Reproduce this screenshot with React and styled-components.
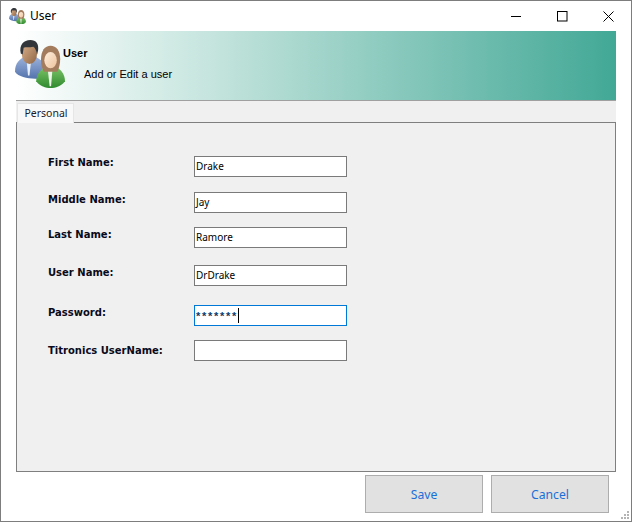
import React from "react";
import styled, { createGlobalStyle } from "styled-components";

const Global = createGlobalStyle`
  html, body { margin: 0; padding: 0; background: #fff; }
  body { font-family: "Liberation Sans", Arial, sans-serif; font-size: 11px; color: #000; }
`;

const Win = styled.div`
  width: 632px; height: 522px; box-sizing: border-box; position: relative;
  border: 1px solid #7d7d7d; background: #fff;
  display: flex; flex-direction: column; overflow: hidden;
`;
const TitleBar = styled.div`
  height: 30px; flex: none; display: flex; align-items: center; padding-left: 8px;
`;
const AppName = styled.span`
  font-family: "Noto Sans", "Open Sans", sans-serif; font-size: 12px; margin-left: 4px; margin-top: -1px;
`;
const Controls = styled.div`margin-left: auto; display: flex; align-items: center;`;
const Ctl = styled.div`width: 46px; height: 30px; display: flex; align-items: center; justify-content: center;`;
const Body = styled.div`flex: 1; display: flex; flex-direction: column; padding: 0 15px 0 15px;`;
const Banner = styled.div`
  height: 69px; flex: none; box-sizing: content-box; border-bottom: 1px solid #a0a0a0;
  background: linear-gradient(90deg, #ffffff 0%, #c6e5de 32%, #42a896 100%);
  display: flex;
`;
const BannerIcon = styled.div`width: 47px; padding-top: 9px; flex: none; margin-left: -1px; margin-right: 1px; svg { display:block; }`;
const BannerText = styled.div`display: flex; flex-direction: column;`;
const BannerTitle = styled.div`font-family: "Liberation Sans", sans-serif; font-weight: 700; font-size: 11px; margin-top: 16px; line-height: 13px;`;
const BannerSub = styled.div`font-family: "Liberation Sans", sans-serif; font-size: 11px; margin: 7px 0 0 21px; line-height: 14px;`;
const TabStrip = styled.div`
  height: 21px; flex: none; background: #f0f0f0; display: flex; padding-left: 1px; align-items: flex-end;
`;
const Tab = styled.div`
  background: #f9f9f9; border: 1px solid #e6e6e6; border-bottom: none;
  font-family: "Noto Sans", sans-serif; font-size: 10.5px; color: #1a1a2a; display: flex; align-items: center; justify-content: center; box-sizing: content-box;
  margin-bottom: -1px; padding: 0 0 2px 1px; width: 54px; height: 17px; position: relative; z-index: 1;
`;
const Panel = styled.div`
  width: 600px; height: 350px; box-sizing: border-box; border: 1px solid #7f7f7f; background: #f0f0f0; flex: none;
  padding: 33px 0 0 31px; display: flex; flex-direction: column;
`;
const Row = styled.div`
  display: flex; align-items: flex-start; margin-top: ${p => p.$mt}px; height: 21px;
`;
const Label = styled.label`
  width: 146px; flex: none; font-family: "DejaVu Sans", Verdana, sans-serif; font-weight: 700; font-size: 10px;
  line-height: 13px; color: #0a0a1a; margin-top: ${p => p.$top}px;
`;
const FieldBox = styled.div`
  width: 153px; height: 21px; box-sizing: border-box; background: #fff;
  border: 1px solid ${p => p.$active ? "#0078d7" : "#7a7a7a"};
  display: flex; align-items: center; padding-left: 1px;
  font-family: "Noto Sans", sans-serif; font-size: 10px; color: #000; line-height: 13px;
`;
const Caret = styled.span`width: 1px; height: 15px; background: #000; margin-left: 0;`;
const Stars = styled.span`font-family: "Liberation Sans", sans-serif; font-weight: 700; font-size: 11px; color: #0a3a6a; letter-spacing: 1.7px; margin-top: 1px;`;
const Footer = styled.div`display: flex; justify-content: flex-end; gap: 8px; padding: 3px 7px 0 0;`;
const Btn = styled.button`
  width: 118px; height: 38px; box-sizing: border-box; background: #e1e1e1; border: 1px solid #adadad; padding: 0;
  font-family: "Noto Sans", sans-serif; font-size: 12.2px; color: #1a6fd8;
`;
const Grip = styled.div`
  position: absolute; right: 2px; bottom: 2px; width: 8px; height: 8px;
  display: grid; grid-template-columns: repeat(3, 2px); grid-auto-rows: 2px; gap: 1px;
`;
const Dot = styled.i`background: ${p => p.$on ? "#b4b4b4" : "transparent"};`;

const People = ({ size, id }) => (
  <svg width={size} height={size * 50 / 52} viewBox="0 0 52 50">
    <defs>
      <linearGradient id={id + "b"} x1="0" y1="0" x2="0" y2="1"><stop offset="0" stopColor="#9db4dc" /><stop offset="1" stopColor="#5473ad" /></linearGradient>
      <linearGradient id={id + "g"} x1="0" y1="0" x2="0" y2="1"><stop offset="0" stopColor="#7cc466" /><stop offset="1" stopColor="#2f8a2f" /></linearGradient>
      <linearGradient id={id + "s"} x1="0" y1="0" x2="1" y2="1"><stop offset="0" stopColor="#dcb28c" /><stop offset="1" stopColor="#8e6545" /></linearGradient>
      <linearGradient id={id + "f"} x1="0" y1="0" x2="1" y2="1"><stop offset="0" stopColor="#fdeedd" /><stop offset="1" stopColor="#eec49c" /></linearGradient>
    </defs>
    <path d="M0 33c0-9 5-14 12-16h6c6 1 10 4 12 9l-4 14c-10 1-22-1-26-7z" fill={`url(#${id}b)`} />
    <path d="M12 20l1.500 17h1.500l2-17z" fill="#e6eef8" />
    <ellipse cx="15" cy="14" rx="8" ry="11" fill={`url(#${id}s)`} />
    <path d="M6 14C4 5 9 0 16 0c6 0 9 4 8 11l-1 4c-1-4-2-7-4-8-4 1-8 0-10 1l-1 7z" fill="#33363a" />
    <path d="M22 43c0-8 6-14 11-15h8c6 1 11 7 11 15-3 4-8 7-15 7s-12-3-15-7z" fill={`url(#${id}g)`} />
    <path d="M34 30l2 18h1.500l1.500-18z" fill="#eef4ea" />
    <path d="M27 21c0-10 4-15 10-15s10 5 10 14c0 5-1 9-3 13H30c-2-4-3-8-3-12z" fill="#a37c5e" />
    <ellipse cx="37" cy="21" rx="6.500" ry="8.500" fill={`url(#${id}f)`} />
  </svg>
);

const fields = [
  { label: "First Name:", value: "Drake", mt: 0, top: 0 },
  { label: "Middle Name:", value: "Jay", mt: 15, top: 1 },
  { label: "Last Name:", value: "Ramore", mt: 14, top: 1 },
  { label: "User Name:", value: "DrDrake", mt: 17, top: 1 },
  { label: "Password:", value: "*******", mt: 19, top: 1, active: true },
  { label: "Titronics UserName:", value: "", mt: 14, top: 4 },
];

const grip = [0, 0, 1, 0, 1, 1, 1, 1, 1];

export default function App() {
  return (
    <>
      <Global />
      <Win>
        <TitleBar>
          <People size={17} id="a" />
          <AppName>User</AppName>
          <Controls>
            <Ctl><svg width="11" height="11" viewBox="0 0 11 11"><path d="M0 5.500h10" stroke="#000" /></svg></Ctl>
            <Ctl><svg width="11" height="11" viewBox="0 0 11 11"><rect x=".5" y=".5" width="9.500" height="9.500" fill="none" stroke="#000" /></svg></Ctl>
            <Ctl><svg width="11" height="11" viewBox="0 0 11 11"><path d="M.5.500l10 10M10.500.500l-10 10" stroke="#000" /></svg></Ctl>
          </Controls>
        </TitleBar>
        <Body>
          <Banner>
            <BannerIcon><People size={50} id="b" /></BannerIcon>
            <BannerText>
              <BannerTitle>User</BannerTitle>
              <BannerSub>Add or Edit a user</BannerSub>
            </BannerText>
          </Banner>
          <TabStrip><Tab>Personal</Tab></TabStrip>
          <Panel>
            {fields.map(f => (
              <Row key={f.label} $mt={f.mt}>
                <Label $top={f.top}>{f.label}</Label>
                <FieldBox $active={f.active}>
                  {f.active ? <><Stars>{f.value}</Stars><Caret /></> : f.value}
                </FieldBox>
              </Row>
            ))}
          </Panel>
          <Footer>
            <Btn>Save</Btn>
            <Btn>Cancel</Btn>
          </Footer>
        </Body>
        <Grip>{grip.map((g, i) => <Dot key={i} $on={g} />)}</Grip>
      </Win>
    </>
  );
}
